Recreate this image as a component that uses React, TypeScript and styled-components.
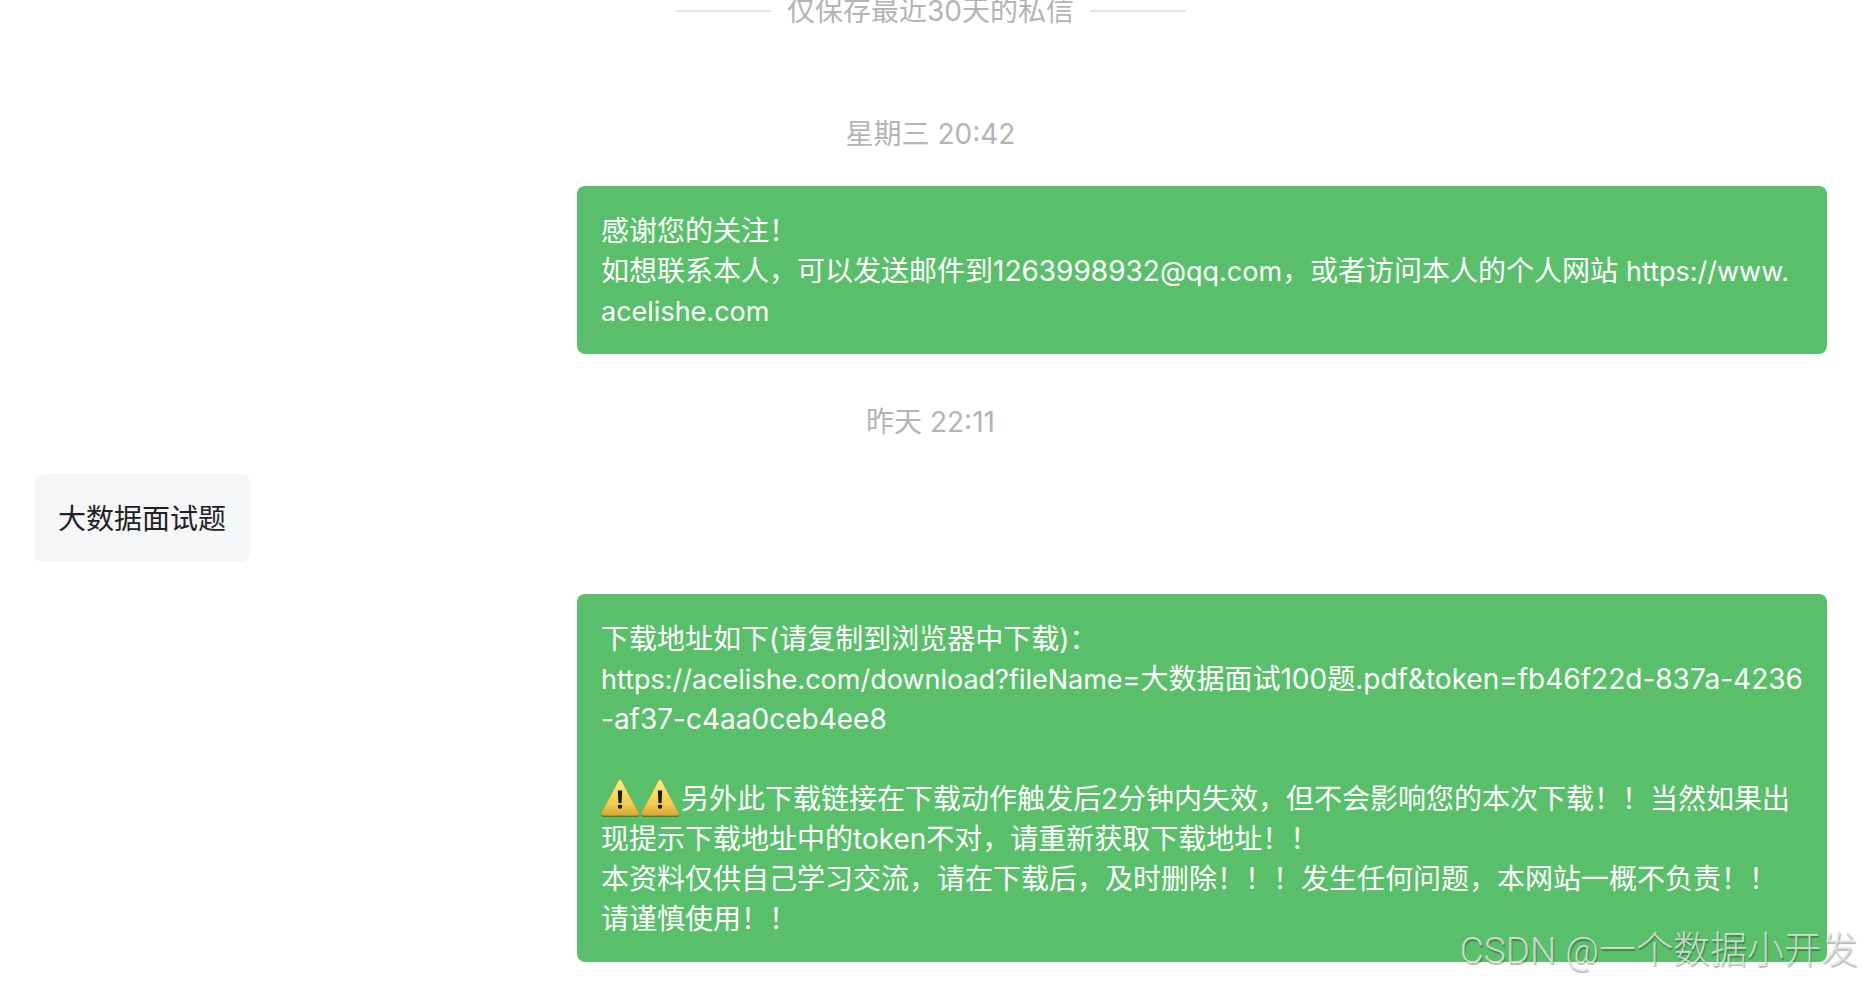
import React from "react";
import styled, { createGlobalStyle } from "styled-components";

const GlobalStyle = createGlobalStyle`
  * { box-sizing: border-box; }
  body {
    margin: 0;
    background: #ffffff;
    font-family: Inter, "Noto Sans CJK SC", sans-serif;
    font-size: 28px;
    line-height: 40px;
    color: #222226;
  }
`;

const Page = styled.main`
  position: relative;
  display: flex;
  flex-direction: column;
  min-height: 100vh;
  padding: 0 35px 24px 34px;
  overflow: hidden;
`;

const Notice = styled.header`
  display: flex;
  align-items: center;
  justify-content: center;
  gap: 16px;
  height: 22px;
  margin-bottom: 44px;
  color: #b4b4b4;
  white-space: nowrap;

  &::before,
  &::after {
    content: "";
    width: 96px;
    height: 2px;
    background: #e4e4e4;
  }
`;

const Timestamp = styled.time`
  margin: 48px 0 32px;
  text-align: center;
  color: #b4b4b4;
`;

const Row = styled.div<{ $mine?: boolean }>`
  display: flex;
  justify-content: ${(p) => (p.$mine ? "flex-end" : "flex-start")};
  padding-left: ${(p) => (p.$mine ? "543px" : "0")};

  & + & {
    margin-top: 32px;
  }
`;

const Bubble = styled.p<{ $mine?: boolean }>`
  margin: 0;
  padding: 25px 24px 23px;
  flex: ${(p) => (p.$mine ? "1" : "none")};
  min-width: 0;
  border-radius: 8px;
  background: ${(p) => (p.$mine ? "#5abf6b" : "#f5f6f8")};
  color: ${(p) => (p.$mine ? "#ffffff" : "#222226")};
  white-space: pre-wrap;
  word-break: break-all;
`;

const Address = styled.span`
  font-size: 27px;
  line-height: 1;
`;

const WarningSvg = styled.svg`
  width: 40px;
  height: 40px;
  vertical-align: top;
`;

const Watermark = styled.span`
  position: absolute;
  right: 4px;
  bottom: 11px;
  font-family: Roboto, "Noto Sans CJK SC", sans-serif;
  font-size: 37px;
  line-height: 48px;
  font-weight: 300;
  white-space: nowrap;
  color: rgba(226, 226, 226, 0.85);
  text-shadow: 1px 2px 1px rgba(0, 0, 0, 0.3);
`;

const Warning = ({ id }: { id: string }) => (
  <WarningSvg viewBox="0 0 40 40" role="img" aria-label="警告">
    <defs>
      <linearGradient id={id} x1="0" y1="0" x2="0" y2="1">
        <stop offset="0" stopColor="#fff08a" />
        <stop offset="0.7" stopColor="#eccb4f" />
        <stop offset="1" stopColor="#d9a532" />
      </linearGradient>
    </defs>
    <path d="M19 2.5Q20 2.5 21 4.5L37 34Q39 38 36 38H3Q-1 38 1 34L17 4.5Q18 2.5 19 2.5Z" fill="#35662f" opacity="0.7" />
    <path d="M19 0.5Q20 0.5 21 2.5L37 32.5Q39 36.5 36 36.5H3Q-1 36.5 1 32.5L17 2.5Q18 0.5 19 0.5Z" fill={`url(#${id})`} stroke="#bd9433" strokeWidth="0.6" />
    <path d="M16.8 11.5H21.2L20.5 24H17.5Z" fill="#1b1809" />
    <circle cx="19" cy="27.6" r="2.2" fill="#1b1809" />
  </WarningSvg>
);

export default function App() {
  return (
    <>
      <GlobalStyle />
      <Page>
        <Notice>仅保存最近30天的私信</Notice>
        <Timestamp>星期三 20:42</Timestamp>
        <Row $mine>
          <Bubble $mine>
            {"感谢您的关注！\n如想联系本人，可以发送邮件到1263998932"}
            <Address>@qq.com</Address>
            {"，或者访问本人的个人网站 "}
            <Address>{"https://www.\nacelishe.com"}</Address>
          </Bubble>
        </Row>
        <Timestamp>昨天 22:11</Timestamp>
        <Row>
          <Bubble>大数据面试题</Bubble>
        </Row>
        <Row $mine>
          <Bubble $mine>
            {"下载地址如下(请复制到浏览器中下载)：\n"}
            <Address>https://acelishe.com/download?fileName=</Address>
            {"大数据面试100题.pdf&token=fb46f22d-837a-4236\n-af37-c4aa0ceb4ee8\n\n"}
            <Warning id="warning-a" />
            <Warning id="warning-b" />
            {"另外此下载链接在下载动作触发后2分钟内失效，但不会影响您的本次下载！！当然如果出\n现提示下载地址中的token不对，请重新获取下载地址！！\n本资料仅供自己学习交流，请在下载后，及时删除！！！发生任何问题，本网站一概不负责！！\n请谨慎使用！！"}
          </Bubble>
        </Row>
        <Watermark>CSDN @一个数据小开发</Watermark>
      </Page>
    </>
  );
}
